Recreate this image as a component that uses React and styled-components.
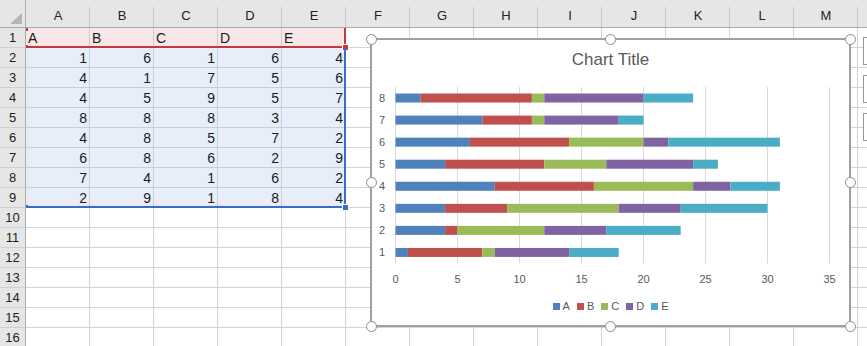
import styled, { createGlobalStyle } from "styled-components"

const GlobalStyle = createGlobalStyle`
  html, body {
    margin: 0;
    padding: 0;
    background: #FFFFFF;
    overflow: hidden;
  }
  body {
    font-family: "Liberation Sans", Arial, sans-serif;
  }
`

const COLUMNS = ["A", "B", "C", "D", "E", "F", "G", "H", "I", "J", "K", "L", "M", ""]
const ROWS = 16
const SERIES = ["A", "B", "C", "D", "E"]
const SERIES_COLORS = ["#4F81BD", "#C0504D", "#9BBB59", "#8064A2", "#4BACC6"]

const data = [
  [1, 6, 1, 6, 4],
  [4, 1, 7, 5, 6],
  [4, 5, 9, 5, 7],
  [8, 8, 8, 3, 4],
  [4, 8, 5, 7, 2],
  [6, 8, 6, 2, 9],
  [7, 4, 1, 6, 2],
  [2, 9, 1, 8, 4],
]

// chart plot geometry (svg units == px)
const X0 = 23.5
const UNIT = 12.4
const PLOT_TOP = 7
const BAND = 22.06
const PLOT_BOTTOM = PLOT_TOP + BAND * 8

const HANDLES = [
  [1, 1, "start"], [1, 2, "center"], [1, 3, "end"],
  [2, 1, "start"], [2, 3, "end"],
  [3, 1, "start"], [3, 2, "center"], [3, 3, "end"],
]

function cellContent(row, col) {
  if (col > 4) return { text: "", tone: null }
  if (row === 1) return { text: SERIES[col], tone: "pink" }
  if (row >= 2 && row <= 9) return { text: data[row - 2][col], tone: "blue" }
  return { text: "", tone: null }
}

function BarChart() {
  return (
    <svg width="477" height="210" viewBox="0 0 477 210">
      {Array.from({ length: 8 }, (_, i) => (
        <line
          key={"g" + i}
          x1={X0 + 62 * i}
          x2={X0 + 62 * i}
          y1={PLOT_TOP}
          y2={PLOT_BOTTOM}
          stroke="#D9D9D9"
          strokeWidth="1"
        />
      ))}
      {data.map((values, r) => {
        const cy = PLOT_TOP + (7 - r + 0.5) * BAND
        let start = 0
        return (
          <g key={"c" + r}>
            <text
              x="13"
              y={cy}
              textAnchor="end"
              dominantBaseline="central"
              fontSize="11"
              fill="#595959"
              fontFamily="Liberation Sans, Arial, sans-serif"
            >
              {r + 1}
            </text>
            {values.map((v, s) => {
              const x = X0 + start * UNIT
              start += v
              return (
                <rect
                  key={s}
                  x={x}
                  y={cy - 4.5}
                  width={v * UNIT}
                  height="9"
                  fill={SERIES_COLORS[s]}
                />
              )
            })}
          </g>
        )
      })}
      {Array.from({ length: 8 }, (_, i) => (
        <text
          key={"x" + i}
          x={X0 + 62 * i}
          y="199"
          textAnchor="middle"
          dominantBaseline="central"
          fontSize="11"
          fill="#595959"
          fontFamily="Liberation Sans, Arial, sans-serif"
        >
          {i * 5}
        </text>
      ))}
    </svg>
  )
}

export default function App() {
  return (
    <>
      <GlobalStyle />
      <Sheet>
        <Grid>
          <Corner />
          {COLUMNS.map((c, i) => (
            <ColHeader key={"h" + i}>{c}</ColHeader>
          ))}
          {Array.from({ length: ROWS }, (_, i) => {
            const row = i + 1
            return [
              <RowHeader key={"r" + row}>{row}</RowHeader>,
              ...COLUMNS.map((c, col) => {
                const { text, tone } = cellContent(row, col)
                return (
                  <Cell key={row + "-" + col} $tone={tone} $right={typeof text === "number"}>
                    {text}
                  </Cell>
                )
              }),
            ]
          })}
        </Grid>

        <Range $color="#C4393D" $top={28} $height={20}>
          <RangeMark $color="#C4393D" $at="top" />
          <RangeMark $color="#C4393D" $at="bottom" />
          <RangeHandle $color="#C4393D" />
        </Range>
        <Range $color="#3B6DC8" $top={48} $height={160}>
          <RangeMark $color="#3B6DC8" $at="bottom" />
          <RangeHandle $color="#3B6DC8" />
        </Range>

        <ChartFrame>
          <ChartTitle>Chart Title</ChartTitle>
          <BarChart />
          <Legend>
            {SERIES.map((s, i) => (
              <LegendItem key={s}>
                <Swatch $color={SERIES_COLORS[i]} />
                {s}
              </LegendItem>
            ))}
          </Legend>
          <HandleLayer>
            {HANDLES.map(([r, c, j]) => (
              <Handle key={r + "-" + c} $row={r} $col={c} $justify={j} />
            ))}
          </HandleLayer>
        </ChartFrame>

        <ChartButtons>
          <ChartButton />
          <ChartButton />
          <ChartButton />
        </ChartButtons>
      </Sheet>
    </>
  )
}

const Sheet = styled.div`
  position: relative;
  width: 867px;
  height: 346px;
  overflow: hidden;
  background: #FFFFFF;
`

const Grid = styled.div`
  display: grid;
  grid-template-columns: 26px repeat(14, 64px);
  grid-template-rows: 28px repeat(16, 20px);
  font-size: 14px;
  color: #1A1A1A;
`

const Corner = styled.div`
  position: relative;
  background: #E6E6E6;
  border-right: 1px solid #ABABAB;
  border-bottom: 1px solid #ABABAB;
  box-sizing: border-box;
  &::after {
    content: "";
    position: absolute;
    right: 3px;
    bottom: 3px;
    width: 0;
    height: 0;
    border-left: 12px solid transparent;
    border-bottom: 11px solid #B5B5B5;
  }
`

const ColHeader = styled.div`
  position: relative;
  display: flex;
  align-items: center;
  justify-content: center;
  padding-top: 4px;
  background: #E6E6E6;
  border-bottom: 1px solid #ABABAB;
  box-sizing: border-box;
  color: #222222;
  font-size: 13px;
  &::after {
    content: "";
    position: absolute;
    right: 0;
    top: 7px;
    bottom: 0;
    width: 1px;
    background: #C6C6C6;
  }
`

const RowHeader = styled.div`
  display: flex;
  align-items: center;
  justify-content: center;
  background: #E6E6E6;
  border-right: 1px solid #ABABAB;
  border-bottom: 1px solid #D0D0D0;
  box-sizing: border-box;
  color: #222222;
  font-size: 13px;
`

const Cell = styled.div`
  display: flex;
  align-items: center;
  justify-content: ${(props) => (props.$right ? "flex-end" : "flex-start")};
  padding: 0 2px 0 2px;
  box-sizing: border-box;
  border-right: 1px solid ${(props) => (props.$tone ? "#C9CDD4" : "#D4D4D4")};
  border-bottom: 1px solid ${(props) => (props.$tone ? "#C9CDD4" : "#D4D4D4")};
  background: ${(props) =>
    props.$tone === "pink" ? "#F9E6E7" : props.$tone === "blue" ? "#E7EEF9" : "#FFFFFF"};
  white-space: nowrap;
  overflow: hidden;
`

const Range = styled.div`
  position: absolute;
  left: 26px;
  top: ${(props) => props.$top}px;
  width: 320px;
  height: ${(props) => props.$height}px;
  box-sizing: border-box;
  border-right: 2px solid ${(props) => props.$color};
  border-bottom: 2px solid ${(props) => props.$color};
`

const RangeMark = styled.span`
  position: absolute;
  left: 0;
  ${(props) => (props.$at === "top" ? "top: 0;" : "bottom: -2px;")}
  width: 2px;
  height: 3px;
  background: ${(props) => props.$color};
`

const RangeHandle = styled.span`
  position: absolute;
  right: -5px;
  bottom: -5px;
  width: 5px;
  height: 5px;
  background: ${(props) => props.$color};
  border: 1px solid #FFFFFF;
`

const ChartFrame = styled.div`
  position: absolute;
  left: 370px;
  top: 38px;
  width: 481px;
  height: 289px;
  box-sizing: border-box;
  border: 2px solid #A0A0A0;
  background: #FFFFFF;
  display: flex;
  flex-direction: column;
`

const ChartTitle = styled.div`
  height: 40px;
  line-height: 40px;
  text-align: center;
  font-size: 17px;
  color: #595959;
`

const Legend = styled.div`
  height: 32px;
  display: flex;
  align-items: center;
  justify-content: center;
  gap: 7px;
  font-size: 11px;
  color: #595959;
`

const LegendItem = styled.div`
  display: flex;
  align-items: center;
  gap: 3px;
`

const Swatch = styled.span`
  width: 7px;
  height: 7px;
  background: ${(props) => props.$color};
`

const HandleLayer = styled.div`
  position: absolute;
  inset: -6.5px;
  display: grid;
  grid-template-columns: 11px 1fr 11px;
  grid-template-rows: 11px 1fr 11px;
  pointer-events: none;
`

const Handle = styled.span`
  grid-row: ${(props) => props.$row};
  grid-column: ${(props) => props.$col};
  justify-self: ${(props) => props.$justify};
  align-self: ${(props) => (props.$row === 1 ? "start" : props.$row === 3 ? "end" : "center")};
  width: 11px;
  height: 11px;
  box-sizing: border-box;
  border: 1.5px solid #8C8C8C;
  border-radius: 50%;
  background: #FFFFFF;
`

const ChartButtons = styled.div`
  position: absolute;
  left: 863px;
  top: 37px;
  display: flex;
  flex-direction: column;
  gap: 10px;
`

const ChartButton = styled.div`
  width: 26px;
  height: 28px;
  box-sizing: border-box;
  border: 1px solid #999999;
  background: #FFFFFF;
`
